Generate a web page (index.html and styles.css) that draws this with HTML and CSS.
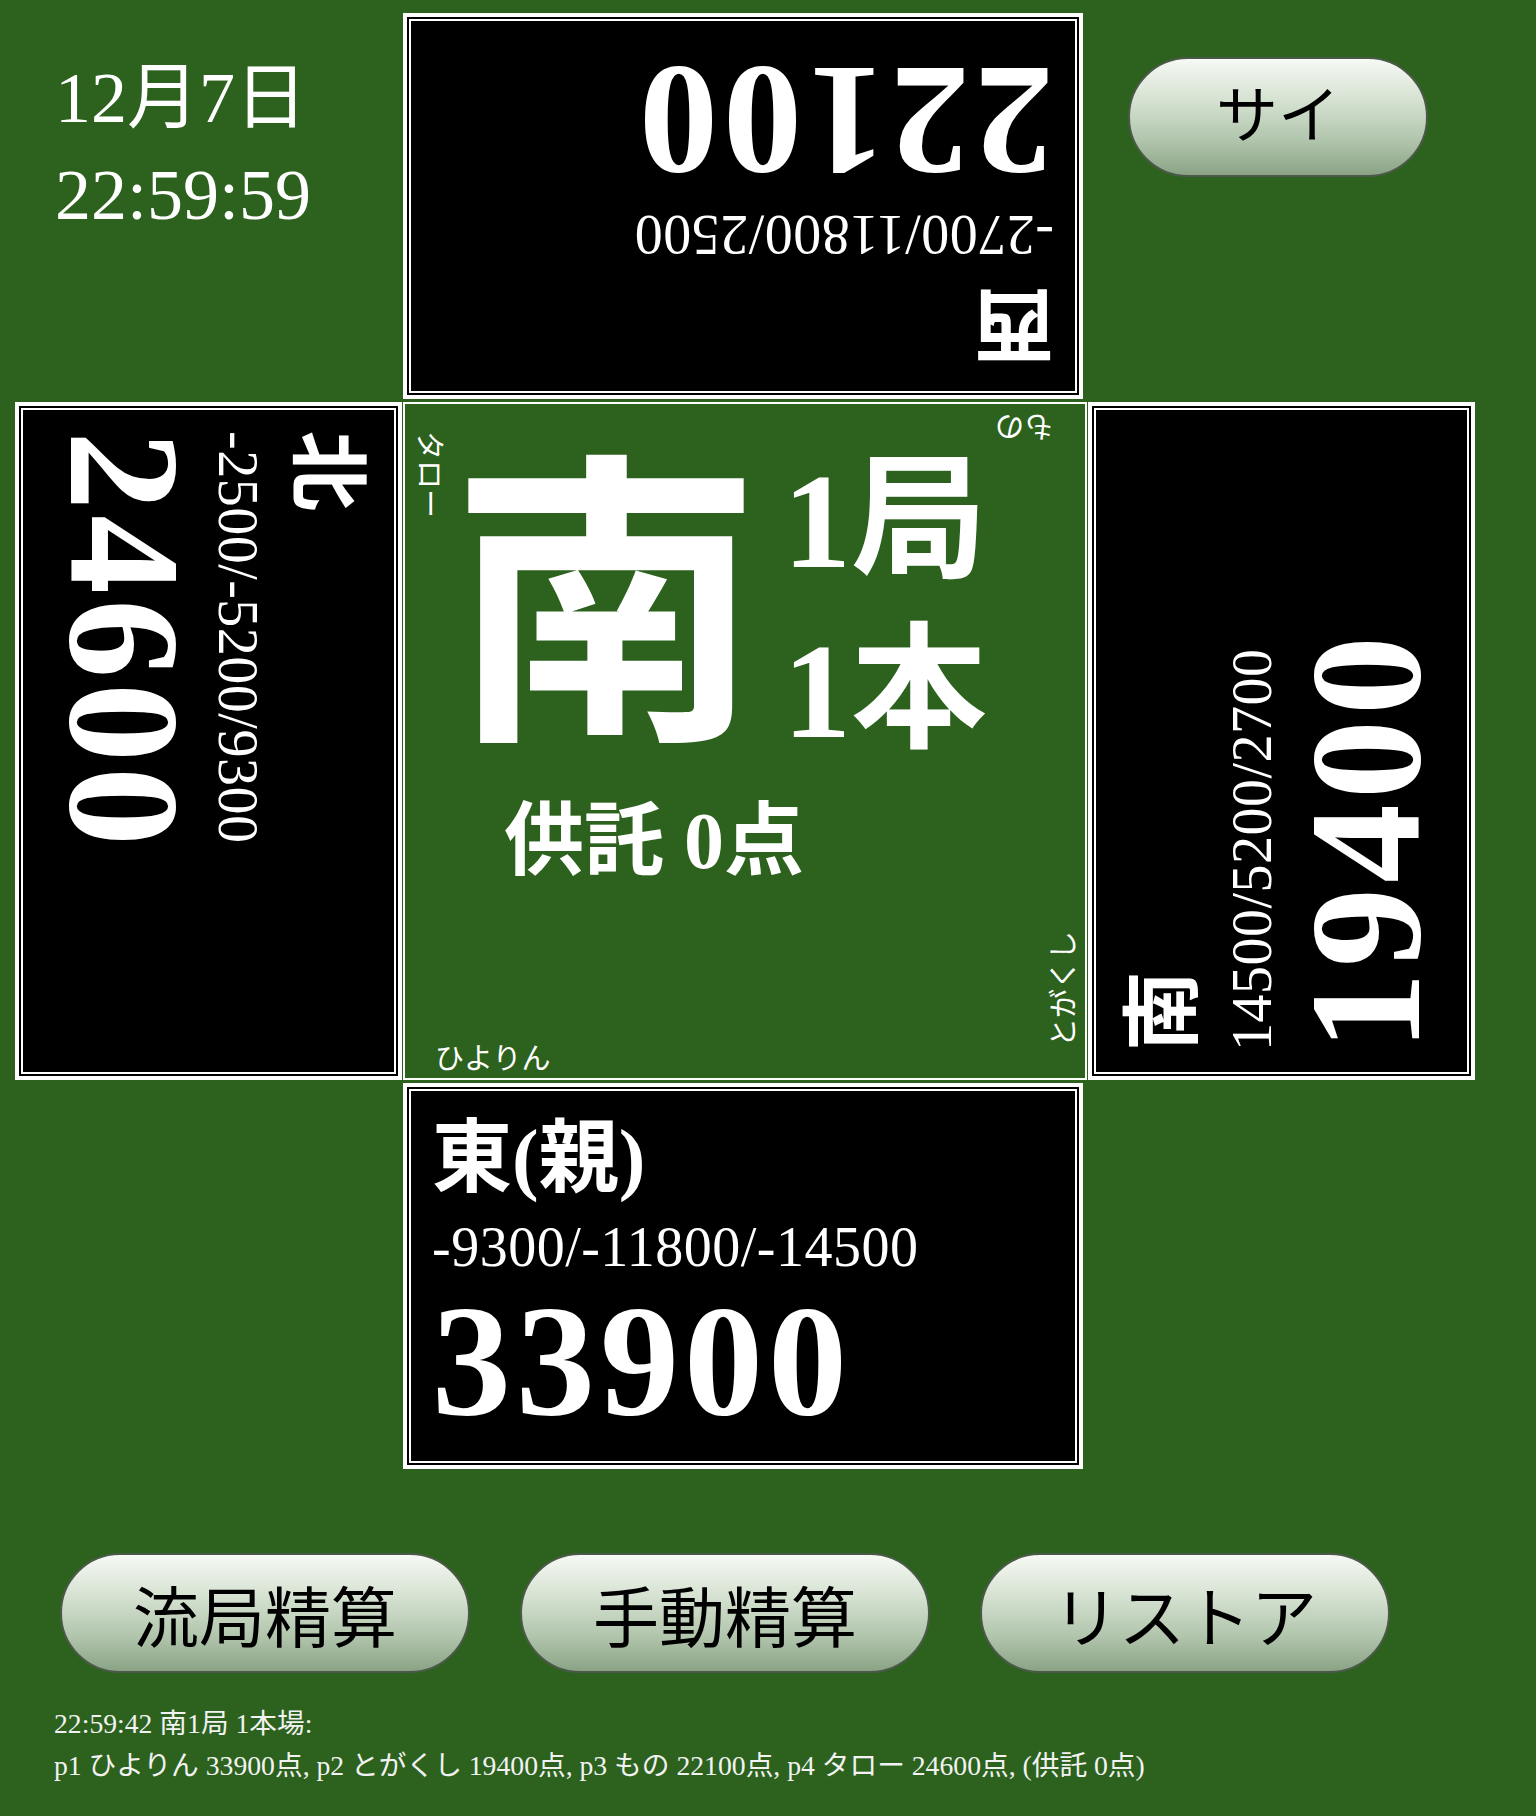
FILE: index.html
```html
<!DOCTYPE html>
<html lang="ja">
<head>
<meta charset="utf-8">
<title>点数表示</title>
<link rel="stylesheet" href="styles.css">
</head>
<body>
<div class="page">
  <div class="board">
    <div class="clock">
      <div>12月7日</div>
      <div>22:59:59</div>
    </div>

    <div class="seat seat-w">
      <div class="seat-label">西</div>
      <div class="seat-diff">-2700/11800/2500</div>
      <div class="seat-score">22100</div>
    </div>

    <div class="corner-tr">
      <button class="pill pill-sai">サイ</button>
    </div>

    <div class="seat seat-n">
      <div class="seat-label">北</div>
      <div class="seat-diff">-2500/-5200/9300</div>
      <div class="seat-score">24600</div>
    </div>

    <div class="center">
      <div class="round">
        <div class="wind">南</div>
        <div class="round-info">
          <div>1局</div>
          <div>1本</div>
        </div>
      </div>
      <div class="kyotaku">供託 0点</div>
      <div class="name name-n">タロー</div>
      <div class="name name-w">もの</div>
      <div class="name name-s">とがくし</div>
      <div class="name name-e">ひよりん</div>
    </div>

    <div class="seat seat-s">
      <div class="seat-label">南</div>
      <div class="seat-diff">14500/5200/2700</div>
      <div class="seat-score">19400</div>
    </div>

    <div class="corner-bl"></div>

    <div class="seat seat-e">
      <div class="seat-label">東(親)</div>
      <div class="seat-diff">-9300/-11800/-14500</div>
      <div class="seat-score">33900</div>
    </div>

    <div class="corner-br"></div>
  </div>

  <div class="actions">
    <button class="pill pill-wide">流局精算</button>
    <button class="pill pill-wide">手動精算</button>
    <button class="pill pill-wide">リストア</button>
  </div>

  <div class="log">
    <div>22:59:42 南1局 1本場:</div>
    <div>p1 ひよりん 33900点, p2 とがくし 19400点, p3 もの 22100点, p4 タロー 24600点, (供託 0点)</div>
  </div>
</div>
</body>
</html>
```

FILE: styles.css
```css
* {
  box-sizing: border-box;
}

html,
body {
  margin: 0;
  padding: 0;
}

body {
  background: #2c621e;
  color: #ffffff;
  font-family: "Liberation Serif", "Noto Sans CJK JP", serif;
  width: 1536px;
  min-height: 1816px;
}

.page {
  padding: 13px 0 0 15px;
}

.board {
  display: grid;
  grid-template-columns: 387px 684px 387px;
  grid-template-rows: 386px 678px 386px;
  column-gap: 1px;
  row-gap: 3px;
}

/* clock */
.clock {
  padding: 37px 0 0 40px;
  font-size: 72px;
  line-height: 97px;
}

.corner-tr {
  padding: 44px 0 0 40px;
}

/* seats */
.seat {
  background: #000000;
  border: 4px solid #ffffff;
  box-shadow: inset 0 0 0 2px #000000, inset 0 0 0 4px #ffffff;
  display: flex;
  flex-direction: column;
  align-items: flex-start;
  padding-block-start: 31px;
  padding-inline-start: 25px;
  overflow: hidden;
  white-space: nowrap;
}

.seat-w {
  width: 680px;
  transform: rotate(180deg);
}

.seat-e {
  width: 680px;
}

.seat-n {
  writing-mode: vertical-rl;
  text-orientation: sideways;
}

.seat-s {
  writing-mode: vertical-rl;
  text-orientation: sideways;
  transform: rotate(180deg);
}

.seat-label {
  font-size: 80px;
  line-height: 80px;
  font-weight: 700;
  margin-block-end: 21px;
}

.seat-diff {
  font-size: 56px;
  line-height: 56px;
  letter-spacing: 0.5px;
  margin-block-end: 7px;
}

.seat-score {
  font-size: 158px;
  line-height: 158px;
  font-weight: 700;
  letter-spacing: 5px;
}

/* center */
.center {
  border: 2px solid #ffffff;
  display: grid;
  white-space: nowrap;
}

.center > * {
  grid-area: 1 / 1;
}

.round {
  display: flex;
  align-items: flex-start;
  align-self: start;
  justify-self: start;
  margin: 53px 0 0 46px;
}

.wind {
  font-size: 310px;
  line-height: 310px;
  font-weight: 700;
}

.round-info {
  display: flex;
  flex-direction: column;
  gap: 34px;
  margin: -4px 0 0 22px;
  font-size: 136px;
  font-weight: 700;
}

.round-info div {
  line-height: 136px;
}

.kyotaku {
  align-self: start;
  justify-self: start;
  margin: 397px 0 0 99px;
  font-size: 80px;
  line-height: 80px;
  font-weight: 700;
}

.name {
  font-family: "Noto Sans CJK JP", sans-serif;
  font-size: 29px;
  line-height: 1;
}

.name-e {
  align-self: end;
  justify-self: start;
  margin: 0 0 7px 30px;
}

.name-s {
  writing-mode: vertical-rl;
  text-orientation: sideways;
  transform: rotate(180deg);
  align-self: end;
  justify-self: end;
  margin: 0 9px 31px 0;
}

.name-w {
  transform: rotate(180deg);
  align-self: start;
  justify-self: end;
  margin: 10px 32px 0 0;
}

.name-n {
  writing-mode: vertical-rl;
  text-orientation: sideways;
  align-self: start;
  justify-self: start;
  margin: 27px 0 0 12px;
}

/* buttons */
.pill {
  display: flex;
  align-items: center;
  justify-content: center;
  height: 120px;
  border-radius: 60px;
  border: 2px solid #4b5a48;
  background: linear-gradient(to bottom, #f6f9f4 0%, #d6e2d2 35%, #b1c5ac 70%, #8aa385 100%);
  color: #000000;
  font-family: "Noto Sans CJK JP", sans-serif;
  font-weight: 400;
  padding: 0;
  margin: 0;
}

.pill-sai {
  width: 300px;
  font-size: 62px;
  padding-bottom: 12px;
}

.actions {
  display: flex;
  gap: 50px;
  margin: 84px 0 0 45px;
}

.pill-wide {
  width: 410px;
  font-size: 66px;
}

/* log */
.log {
  margin: 30px 0 0 39px;
  font-size: 27.7px;
  line-height: 42px;
  color: #f2f2f2;
}
```
